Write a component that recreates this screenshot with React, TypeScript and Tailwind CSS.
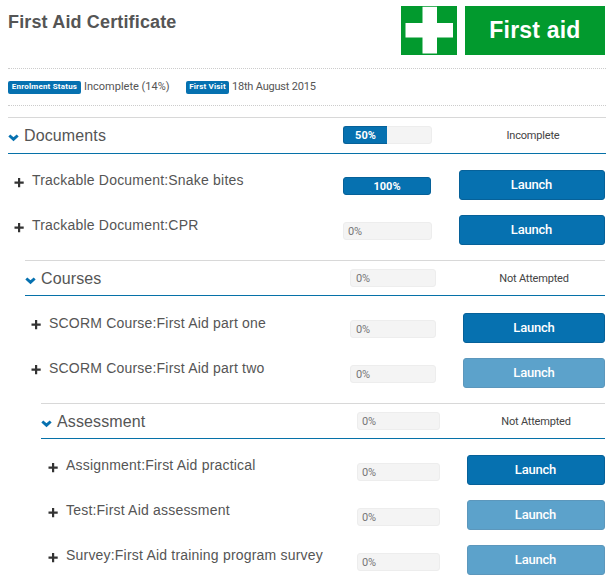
import React from "react";

type Item = { name: string; progress: number; enabled: boolean };
type Section = {
  title: string;
  progress: number;
  status: string;
  items: Item[];
  box: string;
  head: string;
  list: string;
  plus: string;
  indent: string;
  barTop: string;
  barText: string;
  bar: string;
  button: string;
  label: string;
  right: string;
};

const sections: Section[] = [
  {
    title: "Documents",
    progress: 50,
    status: "Incomplete",
    items: [
      { name: "Trackable Document:Snake bites", progress: 100, enabled: true },
      { name: "Trackable Document:CPR", progress: 0, enabled: true },
    ],
    box: "ml-2 mr-[6px] h-[143px]",
    head: "h-[37px]",
    list: "pt-[16px]",
    plus: "mt-[8px]",
    indent: "pl-[6px]",
    barTop: "pt-[7px]",
    barText: "pl-[4px]",
    bar: "w-[89px]",
    button: "w-[146px]",
    label: "pr-[1px]",
    right: "w-[174px]",
  },
  {
    title: "Courses",
    progress: 0,
    status: "Not Attempted",
    items: [
      { name: "SCORM Course:First Aid part one", progress: 0, enabled: true },
      { name: "SCORM Course:First Aid part two", progress: 0, enabled: false },
    ],
    box: "ml-[25px] mr-[7px] h-[143px]",
    head: "h-[36px]",
    list: "pt-[17px]",
    plus: "mt-[7px]",
    indent: "pl-[6px]",
    barTop: "pt-[7px]",
    barText: "pl-[5px]",
    bar: "w-[86px]",
    button: "w-[142px]",
    label: "pr-0",
    right: "w-[169px]",
  },
  {
    title: "Assessment",
    progress: 0,
    status: "Not Attempted",
    items: [
      { name: "Assignment:First Aid practical", progress: 0, enabled: true },
      { name: "Test:First Aid assessment", progress: 0, enabled: false },
      { name: "Survey:First Aid training program survey", progress: 0, enabled: false },
    ],
    box: "ml-[41px] mr-[7px] h-[178px]",
    head: "h-[36px]",
    list: "pt-[16px]",
    plus: "mt-[8px]",
    indent: "pl-[7px]",
    barTop: "pt-[8px]",
    barText: "pl-[4px]",
    bar: "w-[83px]",
    button: "w-[138px]",
    label: "pr-[1px]",
    right: "w-[165px]",
  },
];

const roboto = "font-[Roboto,sans-serif]";

function Progress({ value, width, inset }: { value: number; width: string; inset: string }) {
  return (
    <div className={`h-[18px] shrink-0 ${width} ${roboto} text-[11px] leading-[18px]`}>
      {value === 0 ? (
        <div className={`h-full rounded-[3px] border border-[#ededed] bg-[#f4f4f4] ${inset} leading-[17px] tracking-[-0.2px] text-[#777]`}>0%</div>
      ) : value === 100 ? (
        <div className="mr-px h-full rounded-[3px] border border-[#066199] bg-[#0671b0] text-center leading-[17px] font-bold text-white">100%</div>
      ) : (
        <div className="h-full rounded-[3px] border border-[#ededed] bg-[#f4f4f4]">
          <div
            className="-mt-px -ml-px h-[18px] rounded-l-[3px] border border-r-0 border-[#066199] bg-[#0671b0] text-center leading-[17px] font-bold text-white"
            style={{ width: `${value + 0.5}%` }}
          >
            {value}%
          </div>
        </div>
      )}
    </div>
  );
}

function Chevron() {
  return (
    <svg width="11" height="8" viewBox="0 0 11 8" className="mt-[3px] shrink-0">
      <path d="M1.3 1.5 5.5 5.2 9.7 1.5" fill="none" stroke="#0671b0" strokeWidth="2.9" />
    </svg>
  );
}

function Plus({ offset }: { offset: string }) {
  return (
    <svg width="10" height="10" viewBox="0 0 10 10" className={`${offset} shrink-0`}>
      <path d="M4 0h2.2v3.500h3.500v2.200H6.200v3.500H4V5.700H.5V3.500H4z" fill="#333" />
    </svg>
  );
}

function SectionBlock({ section }: { section: Section }) {
  return (
    <section className={section.box}>
      <header className={`flex items-start border-t border-t-[#d8d8d8] border-b border-b-[#0671a8] pt-[8px] ${section.head}`}>
        <div className="mt-px flex h-[18px] flex-1 items-center gap-[5px] text-[16px] tracking-[0.12px] text-[#555]">
          <Chevron />
          <h2>{section.title}</h2>
        </div>
        <Progress value={section.progress} width={section.bar} inset={section.barText} />
        <div className={`shrink-0 ${section.right} flex justify-end`}>
          <span className={`${section.button} mt-px text-center ${roboto} text-[11px] leading-[18px] tracking-[-0.2px] text-[#444]`}>{section.status}</span>
        </div>
      </header>
      <div className={`flex flex-col gap-[15px] ${section.list}`}>
        {section.items.map((item) => (
          <div key={item.name} className="flex h-[30px] items-start">
            <div className={`flex flex-1 items-start gap-[8px] whitespace-nowrap ${section.indent}`}>
              <Plus offset={section.plus} />
              <span className="text-[14px] leading-5 tracking-[0.2px] text-[#555]">{item.name}</span>
            </div>
            <div className={section.barTop}>
              <Progress value={item.progress} width={section.bar} inset={section.barText} />
            </div>
            <div className={`flex shrink-0 justify-end ${section.right} ${section.title === "Documents" ? "pr-px" : ""}`}>
              <button
                disabled={!item.enabled}
                className={`h-[30px] ${section.button} rounded-[3px] border border-[#066199] bg-[#0671b0] ${section.label} pb-[1px] ${roboto} text-[13px] leading-[20px] font-medium tracking-[-0.2px] text-white disabled:opacity-65`}
              >
                Launch
              </button>
            </div>
          </div>
        ))}
      </div>
    </section>
  );
}

export default function App() {
  return (
    <main className="h-[581px] w-[612px] overflow-hidden bg-white font-['Liberation_Sans',Arial,sans-serif]">
      <div className="flex h-[68px] justify-between pt-[6px] pr-[7px] pl-2">
        <h1 className="pt-[4px] text-[18px] leading-6 font-bold tracking-[0.15px] text-[#555]">First Aid Certificate</h1>
        <div className="flex gap-[8px]">
          <svg width="56" height="49" viewBox="0 0 56 49">
            <path d="M0 0h56v49H0z" fill="#029a2e" />
            <path d="M21.500.8H36V17h16v14.500H36v16H21.500v-16h-17V17h17z" fill="#fff" />
          </svg>
          <div className="h-[49px] w-[140px] bg-[#029a2e] text-center text-[23px] leading-[49px] font-bold tracking-[0.2px] text-white">First aid</div>
        </div>
      </div>
      <div className={`mr-[6px] mb-[11px] ml-2 flex h-[38px] border-y border-dotted border-[#ccc] pt-[9px] ${roboto} text-[11px] leading-[17px] text-[#555]`}>
        <span className="mt-[3px] h-[13px] w-[73px] rounded-[2px] bg-[#0671b0] text-center text-[8px] leading-[12px] font-bold tracking-[0.2px] text-white">Enrolment Status</span>
        <span className="ml-[3px] w-[102px]">Incomplete (14%)</span>
        <span className="mt-[3px] h-[13px] w-[43px] rounded-[2px] bg-[#0671b0] text-center text-[8px] leading-[12px] font-bold tracking-[0.2px] text-white">First Visit</span>
        <span className="ml-[3px] tracking-[-0.2px]">18th August 2015</span>
      </div>
      {sections.map((s) => (
        <SectionBlock key={s.title} section={s} />
      ))}
    </main>
  );
}
